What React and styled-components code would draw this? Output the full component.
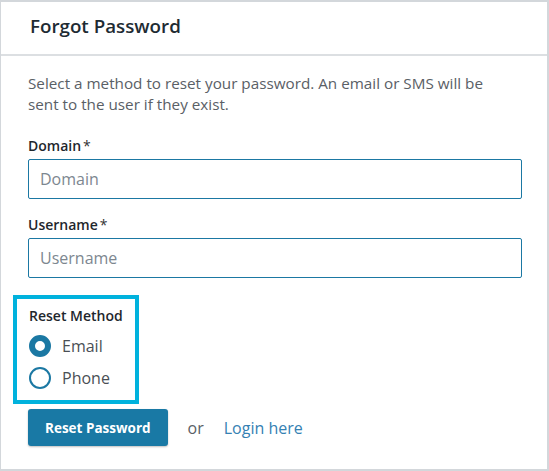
import React, { useState } from 'react';
import styled, { createGlobalStyle } from 'styled-components';

const GlobalStyle = createGlobalStyle`
  html, body {
    margin: 0;
    padding: 0;
    background: #d3d7db;
  }
  body {
    font-family: 'Open Sans', 'Noto Sans', sans-serif;
  }
`;

const Page = styled.div`
  padding: 2px 2px 2px 1px;
  width: 549px;
  height: 471px;
  box-sizing: border-box;
`;

const Card = styled.div`
  background: #fff;
  height: 100%;
  display: flex;
  flex-direction: column;
`;

const Header = styled.div`
  height: 52px;
  border-bottom: 2px solid #dcdfe2;
  display: flex;
  align-items: center;
  padding: 0 29px;
  box-sizing: content-box;
`;

const Title = styled.h2`
  margin: 0;
  font-size: 18.75px;
  font-weight: 600;
  color: #1e2b33;
  padding-bottom: 5px;
`;

const Body = styled.div`
  padding: 17px 25px 0 27px;
  display: flex;
  flex-direction: column;
`;

const Intro = styled.p`
  margin: 0 0 21px;
  padding-right: 32px;
  font-size: 15.25px;
  line-height: 21px;
  color: #5a6066;
`;

const Field = styled.div`
  display: flex;
  flex-direction: column;
  margin-bottom: ${(p) => p.$gap || 17}px;
`;

const Label = styled.label`
  font-size: 14px;
  font-weight: 600;
  color: #1f272d;
  line-height: 19px;
  margin-bottom: 4px;
`;

const Star = styled.span`
  font-weight: 400;
  margin-left: 2px;
  color: #333;
`;

const Input = styled.input`
  height: 40px;
  box-sizing: border-box;
  border: 1px solid #1b78a3;
  border-radius: 2px;
  padding: 0 11px;
  font-family: inherit;
  font-size: 16px;
  color: #333;
  outline: none;
  &::placeholder {
    color: #7d8790;
  }
`;

const MethodBox = styled.fieldset`
  margin: 0 0 5px -15px;
  padding: 7px 12px 6px 12px;
  border: 4px solid #00b2dd;
  width: 126px;
  box-sizing: border-box;
  display: flex;
  flex-direction: column;
`;

const MethodLabel = styled.div`
  font-size: 14px;
  font-weight: 600;
  color: #1f272d;
  line-height: 19px;
  margin-bottom: 5px;
`;

const RadioRow = styled.label`
  display: flex;
  align-items: center;
  gap: 11px;
  height: 32px;
  font-size: 16px;
  color: #4a4f55;
  cursor: pointer;
`;

const RadioDot = styled.span`
  width: 22px;
  height: 22px;
  box-sizing: border-box;
  border-radius: 50%;
  border: ${(p) => (p.$checked ? '6.5px' : '2px')} solid #1b78a3;
  background: #fff;
`;

const Actions = styled.div`
  display: flex;
  align-items: center;
`;

const Button = styled.button`
  height: 37px;
  padding: 0 17px;
  margin-right: 20px;
  background: #1979a5;
  border: none;
  border-radius: 3px;
  color: #fff;
  font-family: inherit;
  font-size: 13.5px;
  font-weight: 700;
  box-shadow: 0 1px 2px rgba(0, 0, 0, 0.25);
  cursor: pointer;
`;

const Or = styled.span`
  font-size: 16px;
  color: #5a6066;
  margin-right: 20px;
`;

const LoginLink = styled.a`
  font-size: 16px;
  color: #3581b3;
  text-decoration: none;
`;

export default function App() {
  const [method, setMethod] = useState('email');

  return (
    <>
      <GlobalStyle />
      <Page>
        <Card>
          <Header>
            <Title>Forgot Password</Title>
          </Header>
          <Body>
            <Intro>
              Select a method to reset your password. An email or SMS will be sent to the user if
              they exist.
            </Intro>
            <Field $gap={16}>
              <Label>
                Domain<Star>*</Star>
              </Label>
              <Input placeholder="Domain" />
            </Field>
            <Field $gap={17}>
              <Label>
                Username<Star>*</Star>
              </Label>
              <Input placeholder="Username" />
            </Field>
            <MethodBox>
              <MethodLabel>Reset Method</MethodLabel>
              <RadioRow onClick={() => setMethod('email')}>
                <RadioDot $checked={method === 'email'} />
                Email
              </RadioRow>
              <RadioRow onClick={() => setMethod('phone')}>
                <RadioDot $checked={method === 'phone'} />
                Phone
              </RadioRow>
            </MethodBox>
            <Actions>
              <Button>Reset Password</Button>
              <Or>or</Or>
              <LoginLink href="#">Login here</LoginLink>
            </Actions>
          </Body>
        </Card>
      </Page>
    </>
  );
}
